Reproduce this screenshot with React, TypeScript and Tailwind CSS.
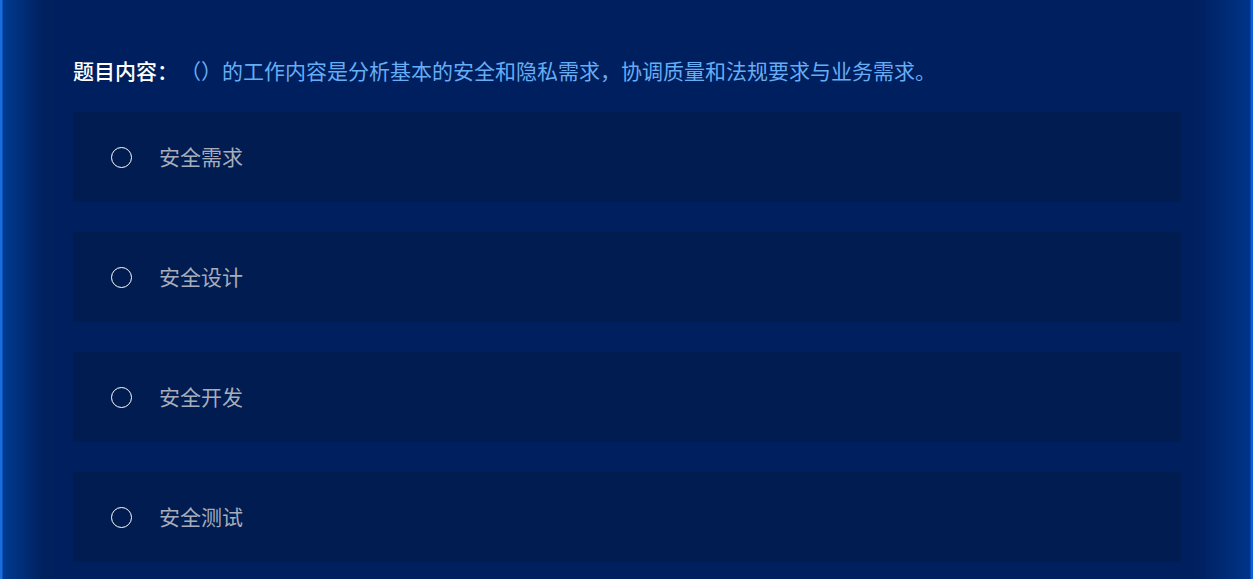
const options = ["安全需求", "安全设计", "安全开发", "安全测试"];

function App() {
  return (
    <div
      className="w-full h-[579px] overflow-hidden bg-[linear-gradient(90deg,#1a6fe0_0px,#1a6fe0_2px,#003b91_3px,#00215f_42px,#001f5e_60px,#001f5e_calc(100%-58px),#003488_calc(100%-3px),#0a5fe0_calc(100%-2px))]"
      style={{ fontFamily: '"Noto Sans CJK SC", "Noto Sans", sans-serif' }}
    >
      <div className="pl-[73px] pr-[72px] pt-[55px]">
        <div className="flex items-center h-[30px] text-[21px] leading-[30px]">
          <span className="text-white font-medium">题目内容：</span>
          <span className="ml-[2px] text-[#66adf5]">（）的工作内容是分析基本的安全和隐私需求，协调质量和法规要求与业务需求。</span>
        </div>
        <div className="mt-[27px] flex flex-col gap-[30px]">
          {options.map((opt) => (
            <div
              key={opt}
              className="h-[90px] bg-[#001c50] flex items-center pl-[38px]"
            >
              <span className="w-[21px] h-[21px] rounded-full border-[1.5px] border-white shrink-0" />
              <span className="ml-[27px] text-[21px] text-[#a7adbb]">{opt}</span>
            </div>
          ))}
        </div>
      </div>
    </div>
  );
}

export default App;
